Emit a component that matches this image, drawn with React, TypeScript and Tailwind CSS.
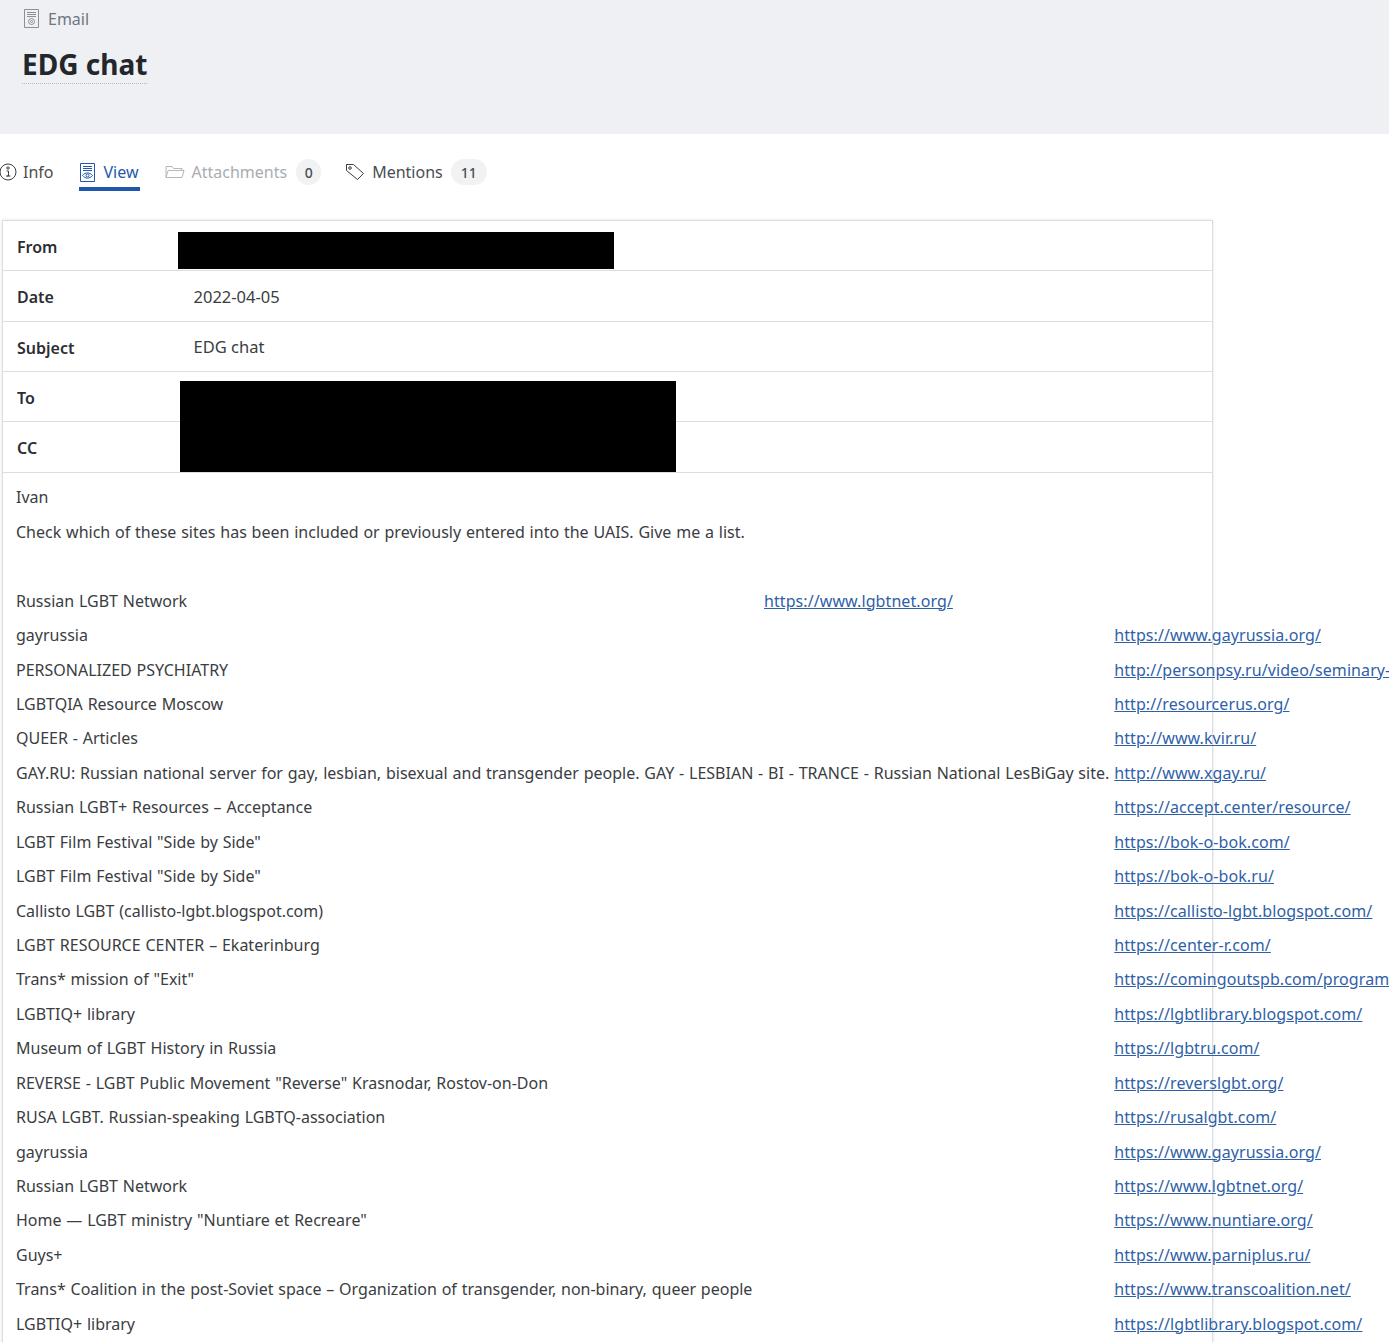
import type { ReactNode } from 'react';

const font = { fontFamily: '"Noto Sans", "Open Sans", sans-serif' };

const sites: [string, string][] = [
  ['gayrussia', 'https://www.gayrussia.org/'],
  ['PERSONALIZED PSYCHIATRY', 'http://personpsy.ru/video/seminary-psihiatriya'],
  ['LGBTQIA Resource Moscow', 'http://resourcerus.org/'],
  ['QUEER - Articles', 'http://www.kvir.ru/'],
  ['GAY.RU: Russian national server for gay, lesbian, bisexual and transgender people. GAY - LESBIAN - BI - TRANCE - Russian National LesBiGay site.', 'http://www.xgay.ru/'],
  ['Russian LGBT+ Resources – Acceptance', 'https://accept.center/resource/'],
  ['LGBT Film Festival "Side by Side"', 'https://bok-o-bok.com/'],
  ['LGBT Film Festival "Side by Side"', 'https://bok-o-bok.ru/'],
  ['Callisto LGBT (callisto-lgbt.blogspot.com)', 'https://callisto-lgbt.blogspot.com/'],
  ['LGBT RESOURCE CENTER – Ekaterinburg', 'https://center-r.com/'],
  ['Trans* mission of "Exit"', 'https://comingoutspb.com/programs/exit'],
  ['LGBTIQ+ library', 'https://lgbtlibrary.blogspot.com/'],
  ['Museum of LGBT History in Russia', 'https://lgbtru.com/'],
  ['REVERSE - LGBT Public Movement "Reverse" Krasnodar, Rostov-on-Don', 'https://reverslgbt.org/'],
  ['RUSA LGBT. Russian-speaking LGBTQ-association', 'https://rusalgbt.com/'],
  ['gayrussia', 'https://www.gayrussia.org/'],
  ['Russian LGBT Network', 'https://www.lgbtnet.org/'],
  ['Home — LGBT ministry "Nuntiare et Recreare"', 'https://www.nuntiare.org/'],
  ['Guys+', 'https://www.parniplus.ru/'],
  ['Trans* Coalition in the post-Soviet space – Organization of transgender, non-binary, queer people', 'https://www.transcoalition.net/'],
  ['LGBTIQ+ library', 'https://lgbtlibrary.blogspot.com/'],
];

function DocIcon({ color, eye }: { color: string; eye?: boolean }) {
  return (
    <svg width="15" height="19" viewBox="0 0 15 19" fill="none" stroke={color} strokeWidth="1" className="shrink-0">
      <path d="M.5.5h14v18H.5z" />
      <path d="M3 3.5h9M3 5.5h9M3 7.5h9" />
      {eye ? (
        <>
          <path d="M2.5 12.5c3-3.5 7-3.5 10 0c-3 3.5-7 3.5-10 0z" />
          <circle cx="7.5" cy="12.5" r="1.5" />
        </>
      ) : (
        <>
          <circle cx="7.5" cy="12.5" r="3" />
          <circle cx="7.5" cy="12.5" r="1" />
        </>
      )}
    </svg>
  );
}

function Tab({ icon, label, className, badge, badgeClass }: { icon: ReactNode; label: string; className: string; badge?: string; badgeClass?: string }) {
  return (
    <div className={`flex items-center h-[26px] ${className}`}>
      {icon}
      <span className="text-[16px]">{label}</span>
      {badge && (
        <span className={`h-[26px] rounded-full bg-[#f1f2f4] text-[#4a4d52] text-[14px] font-medium flex items-center justify-center ${badgeClass}`}>
          {badge}
        </span>
      )}
    </div>
  );
}

function HeadRow({ label, value, h, last }: { label: string; value?: string; h: string; last?: boolean }) {
  return (
    <div className={`flex items-center pl-[14px] pt-[2px] ${h} ${last ? '' : 'border-b border-[#dcdde0]'}`}>
      <div className="w-[176.5px] text-[16px] font-semibold text-[#2b2e33]">{label}</div>
      <div className="text-[16.5px] text-[#3a3d42]">{value}</div>
    </div>
  );
}

export default function App() {
  return (
    <div style={font} className="relative w-[1389px] h-[1342px] overflow-hidden bg-white text-[#3a3d42]">
      <header className="h-[134px] bg-[#eef0f4] pl-[22px] pt-[9px]">
        <div className="flex items-center gap-[9px] ml-[2px] h-[19px] text-[16px] text-[#6f7682]">
          <DocIcon color="#8a9099" />
          Email
        </div>
        <h1 className="mt-[18px] w-fit text-[28px] leading-[37px] font-bold text-[#23262b] border-b border-dotted border-[#b5b8bd]">
          EDG chat
        </h1>
      </header>

      <nav className="flex items-center h-[76px] pt-[1px] pb-[1px] -ml-[1px] gap-[25px]">
        <Tab
          className="text-[#4a4d52] gap-[6px]"
          label="Info"
          icon={
            <svg width="18" height="18" viewBox="0 0 18 18" fill="none" stroke="#3a3d42" strokeWidth="1">
              <circle cx="9" cy="9" r="8" />
              <path d="M7.5 8h2v5h-2M7.5 13h4" />
              <circle cx="9" cy="5" r="1.2" />
            </svg>
          }
        />
        <div className="relative">
          <Tab className="text-[#2558ab] pl-[1px] pr-[1px] gap-[9px]" label="View" icon={<DocIcon color="#2558ab" eye />} />
          <div className="absolute -bottom-[6px] left-0 right-0 h-[4px] bg-[#1f57ad]" />
        </div>
        <Tab
          className="text-[#a9acb1] gap-[7px]"
          label="Attachments"
          badge="0"
          badgeClass="w-[25px] ml-[2px]"
          icon={
            <svg width="20" height="14" viewBox="0 0 20 14" fill="none" stroke="#b4b7bb" strokeWidth="1">
              <path d="M1 12.5V1.5h6l1.5 2h8.5v2M1 12.5l2-7h16l-2 7z" />
            </svg>
          }
        />
        <Tab
          className="text-[#4a4d52] gap-[7px] -ml-[1px]"
          label="Mentions"
          badge="11"
          badgeClass="w-[36px] ml-[1px]"
          icon={
            <svg width="20" height="18" viewBox="0 0 20 18" fill="none" stroke="#3a3d42" strokeWidth="1">
              <path d="M1.5 1.5h7l10 9l-6 6l-11-9z" />
              <circle cx="5" cy="5" r="1.3" />
            </svg>
          }
        />
      </nav>

      <section className="relative ml-[2px] mt-[10px] w-[1211px] h-[1200px] border border-[#dcdde0] shadow-[0_0_3px_rgba(0,0,0,0.12)]">
        <HeadRow label="From" h="h-[50px]" />
        <HeadRow label="Date" h="h-[51px]" value="2022-04-05" />
        <HeadRow label="Subject" h="h-[50px]" value="EDG chat" />
        <HeadRow label="To" h="h-[50px]" />
        <HeadRow label="CC" h="h-[51px]" />

        <div className="absolute left-[175px] top-[11px] w-[436px] h-[37px] bg-black" />
        <div className="absolute left-[177px] top-[160px] w-[496px] h-[91px] bg-black" />

        <div className="pl-[13px] text-[16px] whitespace-nowrap [word-spacing:0.65px]">
          <div className="h-[34.5px] leading-[34.5px] mt-[7px]">Ivan</div>
          <div className="h-[34.5px] leading-[34.5px]">
            Check which of these sites has been included or previously entered into the UAIS. Give me a list.
          </div>
          <div className="h-[34.5px]" />
          <div className="flex h-[34.5px] leading-[34.5px]">
            <span className="w-[748px]">Russian LGBT Network</span>
            <a className="text-[#2f5fa8] underline tracking-[0.08px]">https://www.lgbtnet.org/</a>
          </div>
          <table className="border-collapse">
            <tbody>
              {sites.map(([name, url], i) => (
                <tr key={i} className="h-[34.43px]">
                  <td className="p-0 pr-[5px]">{name}</td>
                  <td className="p-0">
                    <a className="text-[#2f5fa8] underline tracking-[0.08px]">{url}</a>
                  </td>
                </tr>
              ))}
            </tbody>
          </table>
        </div>
      </section>
    </div>
  );
}
